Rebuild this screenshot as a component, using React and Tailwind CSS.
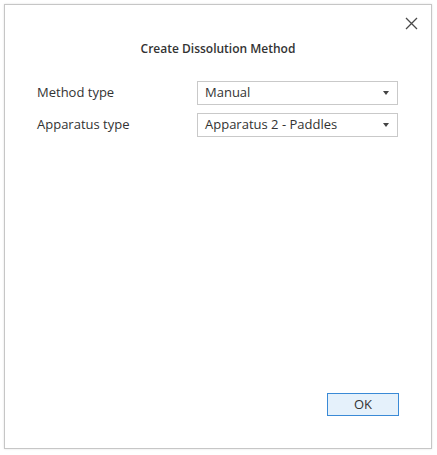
function SelectBox({ value }) {
  return (
    <div className="flex h-[24px] w-[201px] items-center justify-between border border-[#c9c9c9] bg-white pl-[7px] pr-[8px]">
      <span className="text-[13px] text-[#333333]">{value}</span>
      <svg width="6" height="4" viewBox="0 0 6 4" className="fill-[#444444]">
        <path d="M0 0h6L3 4z" />
      </svg>
    </div>
  )
}

function FieldRow({ label, value }) {
  return (
    <div className="flex items-center">
      <span className="w-[160px] text-[13px] text-[#333333]">{label}</span>
      <SelectBox value={value} />
    </div>
  )
}

export default function App() {
  return (
    <div
      className="h-[455px] w-[437px] bg-white p-[4px]"
      style={{ fontFamily: '"Open Sans", "Liberation Sans", sans-serif' }}
    >
      <div className="relative flex h-[445px] w-[428px] flex-col border border-[#c6c6c6] shadow-[0_0_2px_rgba(0,0,0,0.12)]">
        <button
          type="button"
          className="absolute right-[12px] top-[10px] flex h-[16px] w-[16px] items-center justify-center"
        >
          <svg width="13" height="13" viewBox="0 0 13 13" className="stroke-[#4a4a4a]" strokeWidth="1.3">
            <path d="M1 1l11 11M12 1L1 12" />
          </svg>
        </button>

        <h1 className="mt-[35px] text-center text-[12px] font-semibold text-[#333333]">
          Create Dissolution Method
        </h1>

        <div className="mt-[23px] flex flex-col gap-[8px] pl-[32px]">
          <FieldRow label="Method type" value="Manual" />
          <FieldRow label="Apparatus type" value="Apparatus 2 - Paddles" />
        </div>

        <div className="mt-auto flex justify-end pb-[32px] pr-[32px]">
          <button
            type="button"
            className="h-[23px] w-[72px] border border-[#3a8ad6] bg-[#e5f1fb] text-[13px] text-[#333333]"
          >
            OK
          </button>
        </div>
      </div>
    </div>
  )
}
